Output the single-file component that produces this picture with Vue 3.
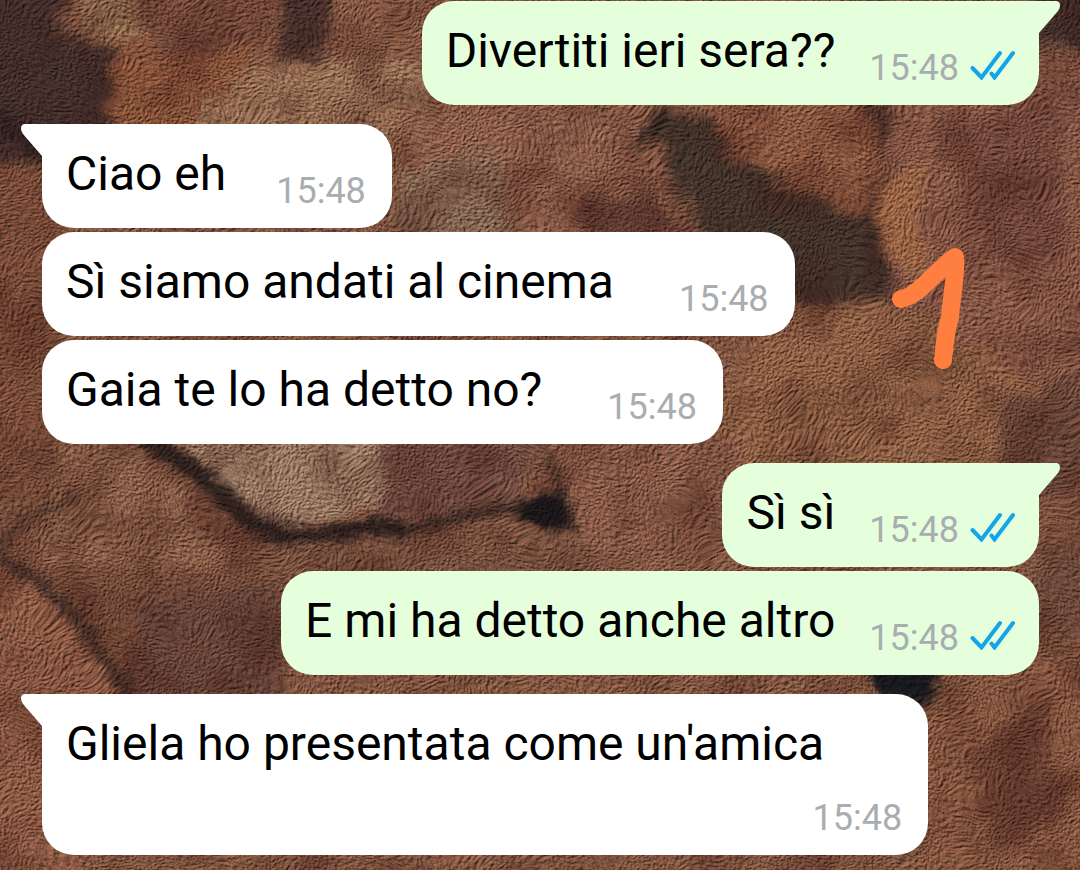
<script setup>
const groups = [
  { side: 'out', messages: [{ text: 'Divertiti ieri sera??', time: '15:48' }] },
  {
    side: 'in',
    messages: [
      { text: 'Ciao eh', time: '15:48', fit: 'tight' },
      { text: 'Sì siamo andati al cinema', time: '15:48' },
      { text: 'Gaia te lo ha detto no?', time: '15:48' },
    ],
  },
  {
    side: 'out',
    messages: [
      { text: 'Sì sì', time: '15:48' },
      { text: 'E mi ha detto anche altro', time: '15:48' },
    ],
  },
  { side: 'in', messages: [{ text: "Gliela ho presentata come un'amica", time: '15:48', fit: 'stacked' }] },
]
</script>

<template>
  <main class="chat">
    <svg class="wallpaper" viewBox="0 0 1080 870" preserveAspectRatio="xMidYMid slice" aria-hidden="true">
      <defs>
        <filter id="soft" x="-5%" y="-5%" width="110%" height="110%" color-interpolation-filters="sRGB">
          <feGaussianBlur stdDeviation="6" result="b" />
          <feTurbulence type="fractalNoise" baseFrequency="0.035" numOctaves="4" seed="8" result="n" />
          <feDisplacementMap in="b" in2="n" scale="26" xChannelSelector="R" yChannelSelector="G" />
        </filter>
        <filter id="crease" x="-5%" y="-5%" width="110%" height="110%" color-interpolation-filters="sRGB">
          <feGaussianBlur stdDeviation="4" result="b" />
          <feTurbulence type="fractalNoise" baseFrequency="0.08" numOctaves="3" seed="3" result="n" />
          <feDisplacementMap in="b" in2="n" scale="14" xChannelSelector="R" yChannelSelector="G" />
        </filter>
        <filter id="fur" x="0" y="0" width="100%" height="100%" color-interpolation-filters="sRGB">
          <feTurbulence type="fractalNoise" baseFrequency="0.28 0.4" numOctaves="4" seed="21" result="n" />
          <feTurbulence type="fractalNoise" baseFrequency="0.014" numOctaves="2" seed="5" result="w" />
          <feDisplacementMap in="n" in2="w" scale="60" xChannelSelector="R" yChannelSelector="G" result="d" />
          <feDiffuseLighting in="d" surfaceScale="2" diffuseConstant="0.9" lighting-color="#ffffff">
            <feDistantLight azimuth="230" elevation="40" />
          </feDiffuseLighting>
        </filter>
        <filter id="mottle" x="0" y="0" width="100%" height="100%" color-interpolation-filters="sRGB">
          <feTurbulence type="fractalNoise" baseFrequency="0.018" numOctaves="4" seed="14" />
          <feColorMatrix values="0 0 0 0 0.22  0 0 0 0 0.09  0 0 0 0 0.07  2.8 0 0 0 -1.15" />
        </filter>
      </defs>
      <rect width="1080" height="870" fill="#76503e" />
      <g filter="url(#soft)">
        <rect x="-60" y="-60" width="1200" height="990" fill="#79503d" />
        <path d="M-60-60H70L60 40 130 50 110 130 60 190-60 150Z" fill="#3d2b28" />
        <path d="M50-60H120L150 40 90 40Z" fill="#846248" />
        <path d="M120 40 240 30 250 90 160 135 105 120Z" fill="#7b4b34" />
        <path d="M120-60H290L270 40 150 60Z" fill="#6d4537" />
        <path d="M285-60H335L325 60 280 62Z" fill="#432d2a" />
        <path d="M190 130Q220 70 310 62L430 60V140Z" fill="#8c664d" />
        <path d="M-60 170 60 160V450L-60 470Z" fill="#6f4534" />
        <path d="M400 110H640L680 240H400Z" fill="#815744" />
        <path d="M400 170 500 150 510 240H390Z" fill="#7a5d4b" />
        <path d="M575 175Q600 215 650 195L700 240H590Z" fill="#5a382f" />
        <path d="M650 110 720 120 860 205 900 300 790 305 690 220Z" fill="#3e2f28" />
        <path d="M690 60H900L880 190 860 215 800 190 730 155Z" fill="#80513b" />
        <path d="M860 100H910L885 185Z" fill="#4b3028" />
        <path d="M1030 50H1140V-60H1040Z" fill="#3b2a27" />
        <path d="M900 90 1000 60 1140 70V430L1000 380 890 290 865 210Z" fill="#7b5040" />
        <path d="M870 190 920 160 920 280 880 250Z" fill="#8f5c3f" />
        <path d="M960 120 1060 100V260L990 260Z" fill="#6a4237" />
        <path d="M780 310 900 300 1060 400V480H720V400Z" fill="#82583f" />
        <path d="M540 440H740L730 600H600Z" fill="#7e5442" />
        <path d="M1000 410 1140 330V500H1000Z" fill="#644336" />
        <path d="M-60 440H190L260 530 290 580V700H130L40 580-60 540Z" fill="#6c4535" />
        <path d="M60 450H150L230 570 40 560Z" fill="#805843" />
        <path d="M175 440H400L380 500 330 525 250 520Z" fill="#8d6f5a" />
        <path d="M390 440H540L520 505 370 525Z" fill="#69463c" />
        <path d="M240 550 560 525 620 575H280Z" fill="#6f4b3a" />
        <path d="M-60 570 40 590 130 700 60 930H-60Z" fill="#80523e" />
        <path d="M130 600 280 580V700H140Z" fill="#5f3e34" />
        <path d="M910 720 1000 670 1140 640V930H920Z" fill="#7b503b" />
        <path d="M970 760 1040 700 1070 810 1000 860Z" fill="#633c2f" />
        <path d="M1035 550H1140V630H1035Z" fill="#654336" />
      </g>
      <rect width="1080" height="870" filter="url(#mottle)" opacity="0.35" />
      <g filter="url(#crease)" fill="none" stroke="#231918" stroke-linecap="round" stroke-linejoin="round">
        <path d="M667 112 638 146" stroke-width="8" />
        <path d="M150 440Q210 480 240 512T330 533 400 530" stroke-width="19" opacity="0.9" />
        <path d="M340 533Q410 533 450 520T540 505" stroke-width="9" opacity="0.9" />
        <path d="M0 560Q55 585 85 630T135 700" stroke-width="12" opacity="0.6" />
        <path d="M0 548Q30 510 75 500" stroke-width="10" opacity="0.45" />
        <path d="M890 170Q860 205 875 245T905 300" stroke-width="8" opacity="0.35" />
        <path d="M0 120 45 155" stroke-width="20" opacity="0.6" />
        <path d="M514 516Q530 490 560 493L576 528 550 530Z" fill="#191517" stroke-width="2" />
        <path d="M866 668H940L928 703 882 696Z" fill="#15171b" stroke-width="3" />
        <path d="M545 450 572 512" stroke-width="10" opacity="0.5" />
      </g>
      <rect class="pile" x="-60" y="-60" width="1200" height="990" filter="url(#fur)" />
    </svg>

    <svg class="mark" width="76" height="124" viewBox="0 0 76 124" role="img" aria-label="1">
      <path d="M11 54C30 50 45 26 65 12C67 28 61 53 60 73C55 85 55 100 53 115" />
    </svg>

    <section v-for="(group, g) in groups" :key="g" class="group" :class="group.side">
      <article v-for="(message, m) in group.messages" :key="m" class="bubble" :class="[message.fit, { first: m === 0 }]">
        <svg v-if="m === 0" class="tail" width="22" height="33" viewBox="0 0 22 33" aria-hidden="true">
          <path d="M0 0H17Q21 0 21 4.500Q21 7.500 19 10L0 32Z" />
        </svg>
        <p class="text">{{ message.text }}</p>
        <div class="meta">
          <time>{{ message.time }}</time>
          <svg v-if="group.side === 'out'" class="ticks" width="46" height="30" viewBox="0 0 46 30" role="img" aria-label="Letto">
            <path d="M2.500 18 11.500 27.500 30 3M21.500 23.500 24.500 27.500 43 3" />
          </svg>
        </div>
      </article>
    </section>
  </main>
</template>

<style>
body {
  margin: 0;
  background: #76503e;
}
</style>

<style scoped>
.chat {
  position: relative;
  box-sizing: border-box;
  min-height: 100vh;
  padding: 1px 41px 15px 42px;
  display: flex;
  flex-direction: column;
  gap: 19px;
  overflow: hidden;
  font-family: Roboto, "Noto Sans", sans-serif;
}

.wallpaper {
  position: absolute;
  inset: 0;
  width: 100%;
  height: 100%;
}

.pile {
  mix-blend-mode: overlay;
  opacity: 0.6;
}

.mark {
  position: absolute;
  top: 245px;
  right: 114px;
}

.mark path {
  fill: none;
  stroke: #ff7f40;
  stroke-width: 18;
  stroke-linecap: round;
  stroke-linejoin: round;
}

.group {
  position: relative;
  display: flex;
  flex-direction: column;
  align-items: flex-start;
  gap: 4px;
  --fill: #ffffff;
}

.group.out {
  align-items: flex-end;
  --fill: #e5ffdc;
}

.bubble {
  position: relative;
  display: flex;
  align-items: flex-end;
  gap: 65px;
  padding: 22px 26px 16px 24px;
  border-radius: 32px;
  background: var(--fill);
}

.out .bubble {
  gap: 34px;
  padding-right: 23px;
}

.bubble.tight {
  gap: 50px;
}

.in .first {
  border-top-left-radius: 0;
}

.out .first {
  border-top-right-radius: 0;
}

.bubble.stacked {
  flex-direction: column;
  gap: 15px;
}

.stacked .text {
  padding-right: 78px;
}

.tail {
  position: absolute;
  top: 0;
  left: 100%;
  fill: var(--fill);
}

.in .tail {
  left: auto;
  right: 100%;
  transform: scaleX(-1);
}

.text {
  margin: 0 0 10px;
  font-size: 48px;
  line-height: 56px;
  color: #000000;
}

.meta {
  display: flex;
  align-items: flex-end;
  gap: 11px;
  font-size: 36px;
  line-height: 42px;
  color: #a9adb0;
}

.ticks {
  margin-bottom: 9px;
}

.ticks path {
  fill: none;
  stroke: #12a5ea;
  stroke-width: 4;
  stroke-linecap: round;
}
</style>
